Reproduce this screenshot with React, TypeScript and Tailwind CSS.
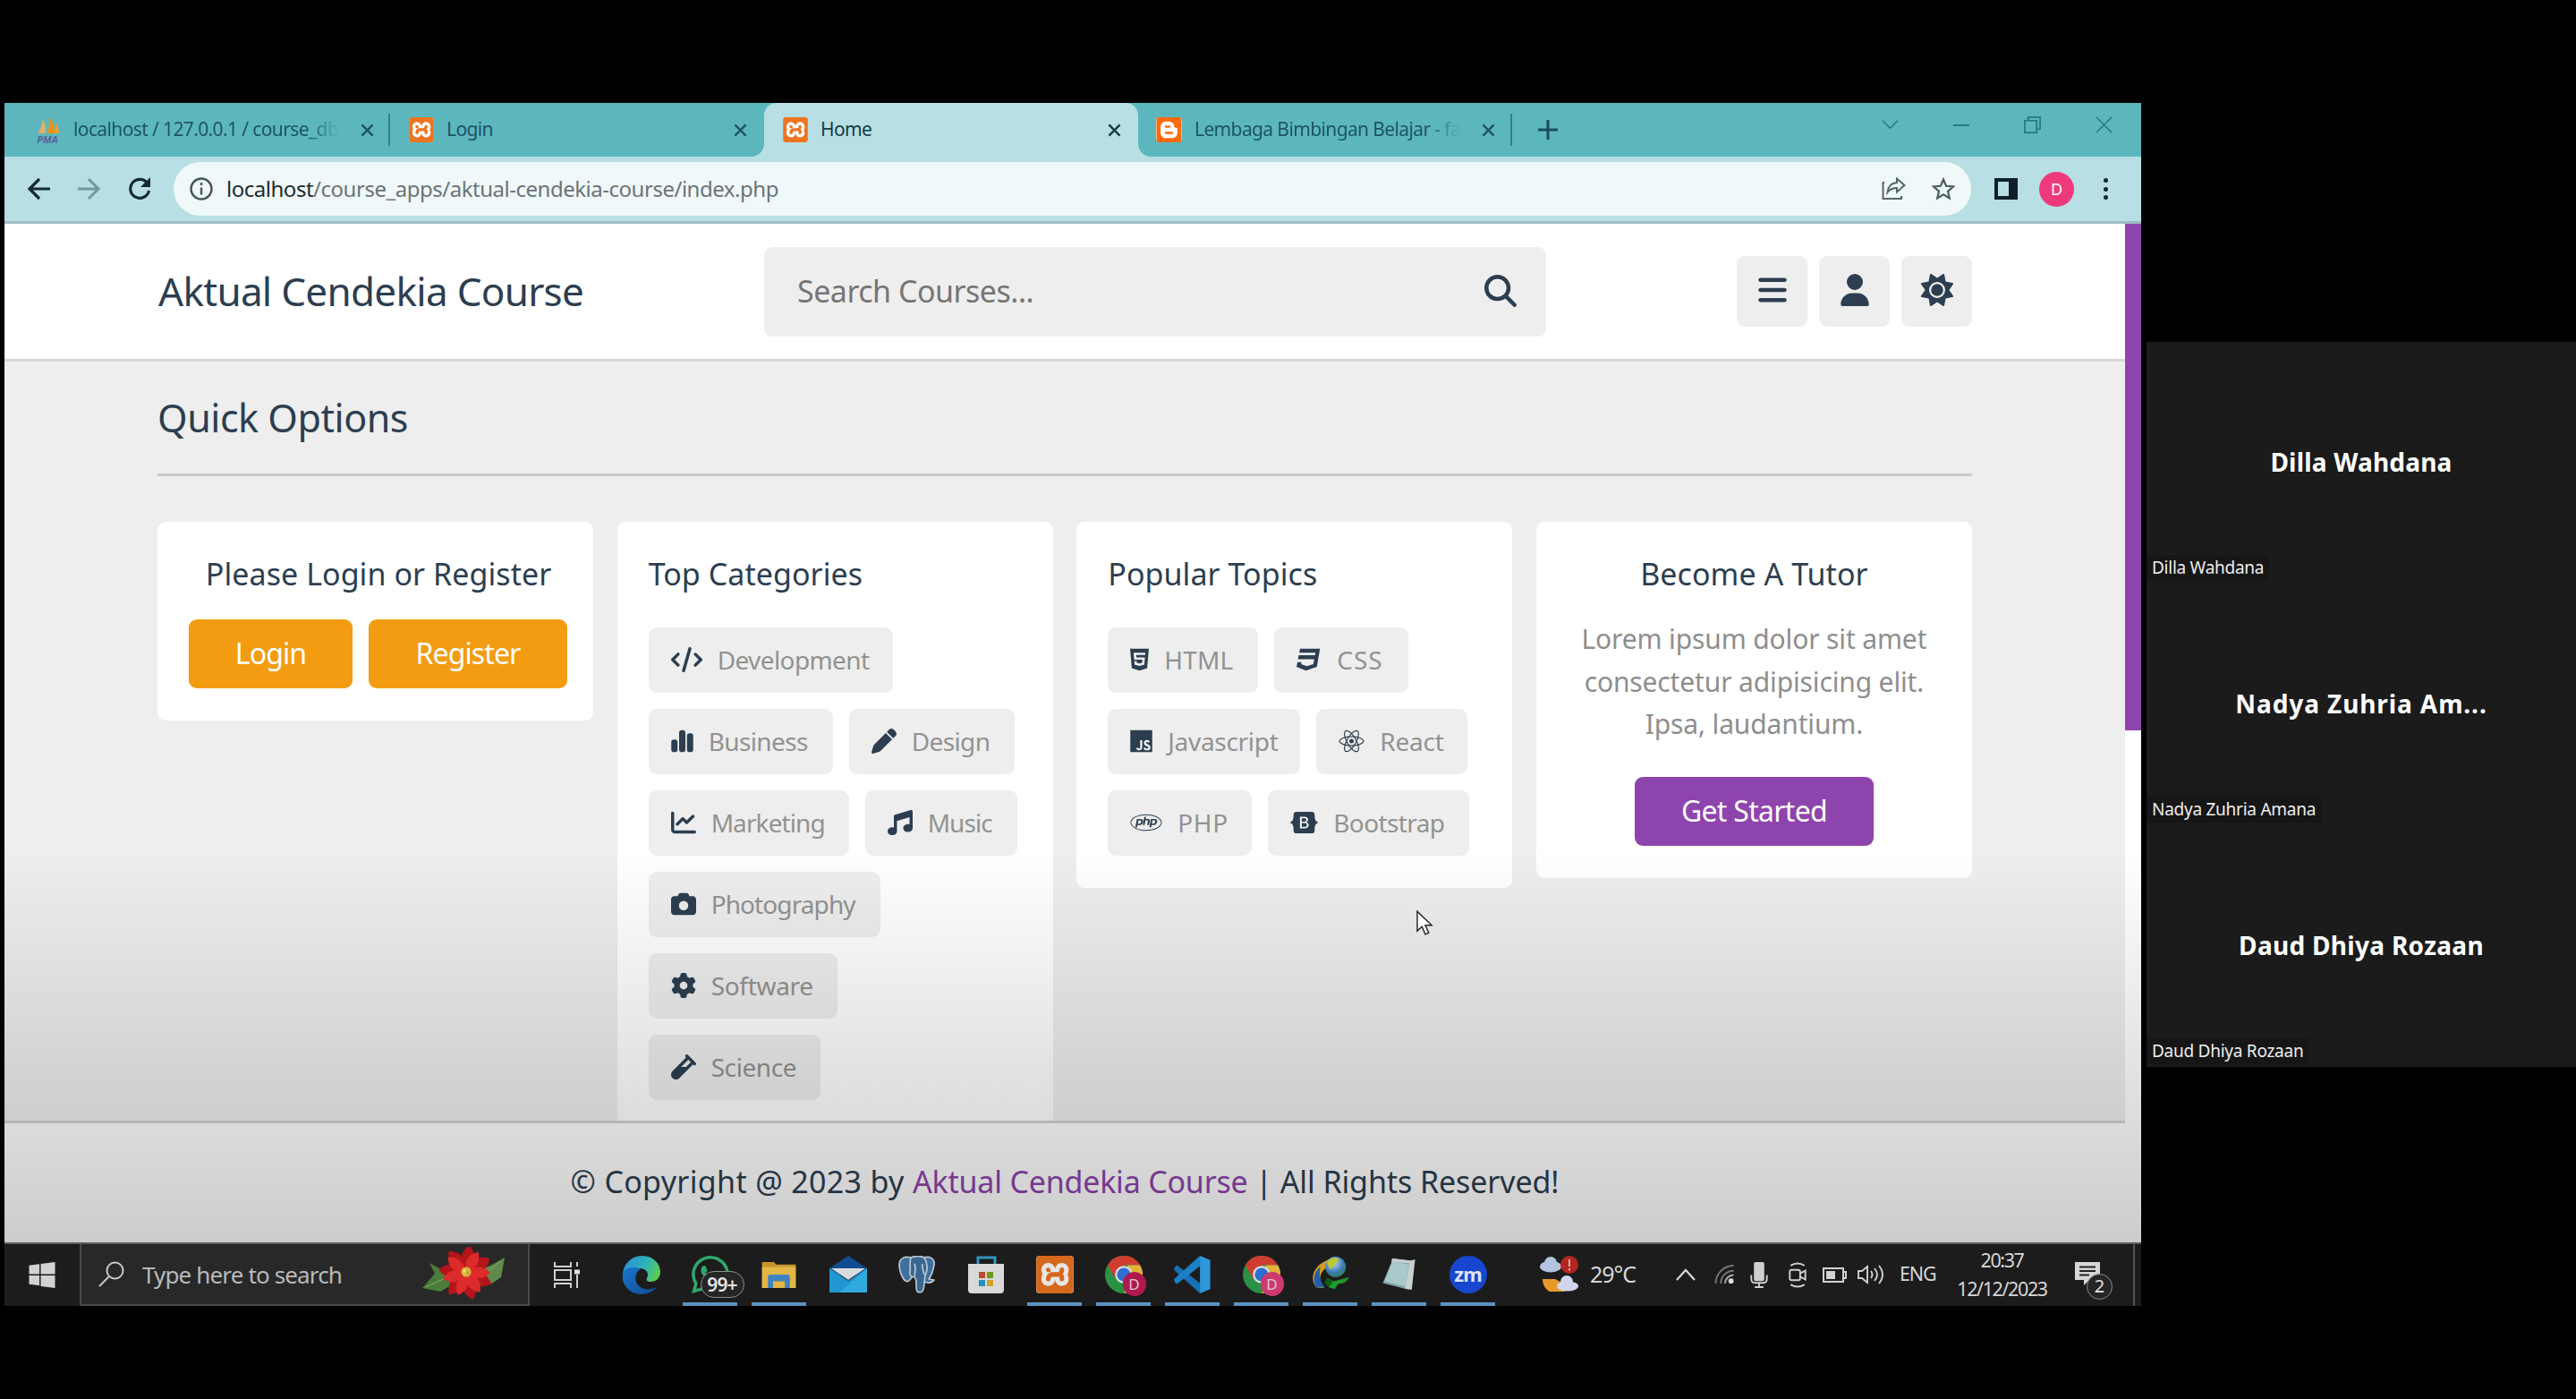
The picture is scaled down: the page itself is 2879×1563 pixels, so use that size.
import React from "react";
import type { IconType } from "react-icons";
import {
  FaCode, FaChartSimple, FaPen, FaChartLine, FaMusic, FaCamera, FaGear, FaVial,
  FaHtml5, FaCss3, FaJs, FaReact, FaPhp, FaBootstrap, FaMagnifyingGlass, FaBars,
  FaUser, FaSun, FaWhatsapp,
} from "react-icons/fa6";
import { SiXampp, SiBlogger } from "react-icons/si";

type Chip = { label: string; icon: IconType; box: string; ic: string; tx?: string };

const categories: Chip[] = [
  { label: "Development", icon: FaCode, box: "w-[273px]", ic: "w-[35px]" },
  { label: "Business", icon: FaChartSimple, box: "w-[206px]", ic: "w-[25px]" },
  { label: "Design", icon: FaPen, box: "w-[185px]", ic: "w-[28px]" },
  { label: "Marketing", icon: FaChartLine, box: "w-[224px]", ic: "w-[28px]", tx: "tracking-[-0.9px]" },
  { label: "Music", icon: FaMusic, box: "w-[170px]", ic: "w-[28px]", tx: "tracking-[-0.9px]" },
  { label: "Photography", icon: FaCamera, box: "w-[259px]", ic: "w-[28px]", tx: "tracking-[-0.9px]" },
  { label: "Software", icon: FaGear, box: "w-[211px]", ic: "w-[28px]", tx: "tracking-[-0.3px]" },
  { label: "Science", icon: FaVial, box: "w-[192px]", ic: "w-[28px]", tx: "tracking-[-0.4px]" },
];

const topics: Chip[] = [
  { label: "HTML", icon: FaHtml5, box: "w-[168px]", ic: "w-[21px]", tx: "tracking-[0.2px]" },
  { label: "CSS", icon: FaCss3, box: "w-[150px]", ic: "w-[28px]", tx: "tracking-[1px]" },
  { label: "Javascript", icon: FaJs, box: "w-[215px]", ic: "w-[25px]", tx: "tracking-[-0.3px]" },
  { label: "React", icon: FaReact, box: "w-[169px]", ic: "w-[29px]", tx: "tracking-[-0.2px]" },
  { label: "PHP", icon: FaPhp, box: "w-[161px]", ic: "w-[36px]", tx: "tracking-[0.6px]" },
  { label: "Bootstrap", icon: FaBootstrap, box: "w-[225px]", ic: "w-[31px]" },
];

function Chips({ items }: { items: Chip[] }) {
  return (
    <div className="mt-[30px] flex flex-wrap gap-[18px]">
      {items.map(({ label, icon: Icon, box, ic, tx = "tracking-[-0.6px]" }) => (
        <div key={label} className={`flex h-[73px] items-center gap-[17px] rounded-[9px] bg-[#eee] pb-[2px] pl-[25px] ${box}`}>
          <Icon className={`h-[28px] shrink-0 text-[#2c3e50] ${ic}`} />
          <span className={`text-[28px] leading-none whitespace-nowrap text-[#929292] ${tx}`}>{label}</span>
        </div>
      ))}
    </div>
  );
}

function CardTitle({ children, center = false }: { children: React.ReactNode; center?: boolean }) {
  return (
    <h3 className={`flex h-[59px] items-center pb-[2px] text-[34px] leading-none tracking-[0.06px] text-[#2c3e50] ${center ? "justify-center" : ""}`}>
      {children}
    </h3>
  );
}

const card = "rounded-[9px] bg-white px-[35px] pt-[29px] pb-[36px]";

function Xampp({ className }: { className: string }) {
  return (
    <span className={`relative flex shrink-0 rounded-[4px] bg-white ${className}`}>
      <SiXampp className="h-full w-full text-[#ee7420]" />
    </span>
  );
}

function Close({ className = "" }: { className?: string }) {
  return (
    <svg viewBox="0 0 16 16" className={`h-[15px] w-[15px] shrink-0 ${className}`} fill="none" stroke="currentColor" strokeWidth="2.6">
      <path d="M1.5 1.5l13 13M14.5 1.5l-13 13" />
    </svg>
  );
}

function PmaIcon() {
  return (
    <span className="relative flex h-[28px] w-[30px] shrink-0 justify-center">
      <svg viewBox="0 0 30 28" className="h-[28px] w-[30px]">
        <path d="M4 18Q9 10 10 2Q14 9 13 18z" fill="#d9b26a" />
        <path d="M14 18Q19 9 18 0Q24 9 23 18z" fill="#f29111" />
        <path d="M23 18Q25 12 24 6Q28 12 28 18z" fill="#f5a02c" />
      </svg>
      <span className="absolute bottom-[-2px] text-[11px] leading-none font-bold text-[#5a5f9c] italic">PMA</span>
    </span>
  );
}

function TabTitle({ children, className = "" }: { children: React.ReactNode; className?: string }) {
  return (
    <span className={`mb-[2px] ml-[14px] w-[297px] shrink-0 overflow-hidden text-[21px] leading-[32px] tracking-[-0.62px] whitespace-nowrap ${className}`}>
      {children}
    </span>
  );
}

const fade = "[mask-image:linear-gradient(to_right,black_88%,transparent)]";

function TabStrip() {
  return (
    <div className="flex h-[60px] bg-[#5cb6be] pl-[13px] text-[#1d5463]">
      <div className="flex w-[418px] items-center pl-[20px]">
        <PmaIcon />
        <TabTitle className={fade}>localhost / 127.0.0.1 / course_db</TabTitle>
        <Close className="ml-[24px]" />
        <span className="ml-auto h-[36px] w-[2px] bg-[#337f8a]" />
      </div>
      <div className="flex w-[418px] items-center pl-[21px]">
        <Xampp className="h-[28px] w-[28px]" />
        <TabTitle>Login</TabTitle>
        <Close className="ml-[24px]" />
      </div>
      <div className="relative flex w-[418px] items-center rounded-t-[14px] bg-[#b8dfe3] pl-[21px] text-[#153c48]">
        <span className="absolute bottom-0 left-[-14px] h-[14px] w-[14px] bg-[radial-gradient(circle_at_0_0,transparent_13.5px,#b8dfe3_14px)]" />
        <span className="absolute right-[-14px] bottom-0 h-[14px] w-[14px] bg-[radial-gradient(circle_at_100%_0,transparent_13.5px,#b8dfe3_14px)]" />
        <Xampp className="h-[28px] w-[28px]" />
        <TabTitle>Home</TabTitle>
        <Close className="ml-[24px]" />
      </div>
      <div className="flex w-[418px] items-center pl-[20px]">
        <span className="flex h-[28px] w-[29px] shrink-0 rounded-[4px] bg-white">
          <SiBlogger className="h-full w-full text-[#ff6a0a]" />
        </span>
        <TabTitle className={fade}>Lembaga Bimbingan Belajar - fa</TabTitle>
        <Close className="ml-[24px]" />
        <span className="ml-auto h-[36px] w-[2px] bg-[#337f8a]" />
      </div>
      <div className="flex flex-1 items-center pl-[29px]">
        <svg viewBox="0 0 22 22" className="h-[22px] w-[22px]" stroke="#1b4b5c" strokeWidth="3"><path d="M11 0v22M0 11h22" /></svg>
        <div className="mr-[32px] mb-[11px] ml-auto flex items-center gap-[61px] text-[#2b7681]">
          <svg viewBox="0 0 20 20" className="h-[19px] w-[19px]" fill="none" stroke="currentColor" strokeWidth="1.6"><path d="M1 5l9 9 9-9" /></svg>
          <span className="h-[2px] w-[18px] bg-[#2b7681]" />
          <svg viewBox="0 0 20 20" className="h-[19px] w-[19px]" fill="none" stroke="currentColor" strokeWidth="1.8"><path d="M1 5h14v14H1zM5 5V1h14v14h-4" /></svg>
          <svg viewBox="0 0 20 20" className="h-[19px] w-[19px]" fill="none" stroke="currentColor" strokeWidth="1.6"><path d="M1 1l18 18M19 1L1 19" /></svg>
        </div>
      </div>
    </div>
  );
}

function Toolbar() {
  return (
    <div className="flex h-[75px] items-center border-b-[3px] border-[#9fbcc1] bg-[#b8dfe3] pl-[25px]">
      <svg viewBox="0 0 26 26" className="h-[26px] w-[26px]" fill="none" stroke="#142a31" strokeWidth="3.2"><path d="M26 13H3M14 2L3 13l11 11" /></svg>
      <svg viewBox="0 0 26 26" className="ml-[31px] h-[26px] w-[26px]" fill="none" stroke="#6f999f" strokeWidth="3"><path d="M0 13h23M12 2l11 11-11 11" /></svg>
      <svg viewBox="0 0 26 26" className="ml-[30px] h-[26px] w-[26px]" fill="none" stroke="#142a31" strokeWidth="3.2"><path d="M22 7A10.5 10.5 0 1 0 23.5 15" /><path d="M25 0v11H14z" fill="#142a31" stroke="none" /></svg>
      <div className="ml-[25px] flex h-[60px] w-[2009px] items-center rounded-full bg-[#f0f9f9] pr-[18px] pl-[18px]">
        <svg viewBox="0 0 26 26" className="h-[26px] w-[26px]" fill="none" stroke="#45565a" strokeWidth="2.4"><circle cx="13" cy="13" r="11.5" /><path d="M13 11.5v8M13 6v3" /></svg>
        <span className="ml-[15px] text-[24px] leading-none tracking-[-0.48px] text-[#6a7477]">
          <span className="text-[#1d2b2f]">localhost</span>/course_apps/aktual-cendekia-course/index.php
        </span>
        <svg viewBox="0 0 28 26" className="ml-auto h-[26px] w-[28px]" fill="none" stroke="#56666a" strokeWidth="2"><path d="M3 6H1.500V24H22v-3M17 1.500l8.500 7.500L17 16.500V12c-5 0-8 1.500-10.500 5C7 11 10.500 6.500 17 6z" /></svg>
        <svg viewBox="0 0 26 26" className="ml-[28px] h-[26px] w-[26px]" fill="none" stroke="#4b5b5f" strokeWidth="2.200"><path d="M13 2.500l3.100 7.300 7.900.7-6 5.200 1.800 7.800L13 19.400l-6.800 4.100L8 15.700l-6-5.200 7.900-.7z" /></svg>
      </div>
      <svg viewBox="0 0 26 24" className="ml-[26px] h-[24px] w-[26px]"><path d="M0 0h26v24H0zM4 4v16h12V4z" fill="#101f28" fillRule="evenodd" /></svg>
      <span className="ml-[24px] flex h-[39px] w-[39px] items-center justify-center rounded-full bg-[#ee3a7c] text-[18px] leading-none text-white">D</span>
      <div className="ml-[33px] flex flex-col gap-[4.500px]">
        <span className="h-[5px] w-[5px] rounded-full bg-[#16262c]" />
        <span className="h-[5px] w-[5px] rounded-full bg-[#16262c]" />
        <span className="h-[5px] w-[5px] rounded-full bg-[#16262c]" />
      </div>
    </div>
  );
}

function SiteHeader() {
  return (
    <header className="flex h-[154px] shrink-0 items-center justify-between border-b-[3px] border-[#d8d8d8] bg-white pr-[171px] pl-[172px]">
      <span className="mb-[2px] w-[677px] text-[44px] leading-none tracking-[-0.7px] text-[#2c3e50]">Aktual Cendekia Course</span>
      <div className="flex h-[100px] w-[874px] items-center rounded-[9px] bg-[#eee] pr-[33px] pb-[2px] pl-[37px]">
        <span className="text-[34px] leading-none tracking-[-0.5px] text-[#757575]">Search Courses...</span>
        <FaMagnifyingGlass className="ml-auto h-[36px] w-[36px] text-[#2c3e50]" />
      </div>
      <div className="ml-auto flex gap-[13px]">
        {[FaBars, FaUser, FaSun].map((Icon, i) => (
          <span key={i} className="flex h-[79px] w-[79px] items-center justify-center rounded-[9px] bg-[#eee]">
            <Icon className="mb-[3px] h-[36px] w-[36px] text-[#2c3e50]" />
          </span>
        ))}
      </div>
    </header>
  );
}

function Site() {
  return (
    <div className="relative flex h-[1138px] overflow-hidden bg-[#eee]">
      <div className="flex w-[2370px] flex-col">
        <SiteHeader />
        <main className="min-h-0 flex-1 overflow-hidden px-[171px]">
          <h1 className="flex h-[128px] items-center border-b-[3px] border-[#c8c8c8] pb-[1px] text-[43px] leading-none tracking-[-0.45px] text-[#2c3e50]">Quick Options</h1>
          <div className="mt-[51px] grid grid-cols-4 items-start gap-[26.500px]">
            <section className={`${card} pr-[28px]`}>
              <CardTitle center>Please Login or Register</CardTitle>
              <div className="mt-[21px] flex gap-[18px] text-[32px] leading-none tracking-[-0.9px] text-white">
                <span className="flex h-[77px] w-[183px] shrink-0 items-center justify-center rounded-[9px] bg-[#f39c12] pb-[1px]">Login</span>
                <span className="flex h-[77px] w-[222px] shrink-0 items-center justify-center rounded-[9px] bg-[#f39c12] pb-[1px]">Register</span>
              </div>
            </section>
            <section className={`${card} h-[760px]`}>
              <CardTitle>Top Categories</CardTitle>
              <Chips items={categories} />
            </section>
            <section className={card}>
              <CardTitle>Popular Topics</CardTitle>
              <Chips items={topics} />
            </section>
            <section className={`${card} flex flex-col items-center`}>
              <CardTitle center>Become A Tutor</CardTitle>
              <p className="mt-[19px] text-center text-[30px] leading-[47.500px] tracking-[-0.14px] text-[#8e8e8e]">
                Lorem ipsum dolor sit amet<br />consectetur adipisicing elit.<br />Ipsa, laudantium.
              </p>
              <span className="mt-[35px] flex h-[77px] w-[267px] items-center justify-center rounded-[9px] bg-[#8e44ad] pb-[1px] text-[32px] leading-none tracking-[-0.7px] text-white">Get Started</span>
            </section>
          </div>
        </main>
        <footer className="flex h-[136px] shrink-0 items-center justify-center border-t-[3px] border-[#d2d2d2] bg-white pb-[3px] text-[34px] leading-none text-[#2c3e50]">
          <span className="tracking-[0.330px] whitespace-pre">© Copyright @ 2023 by <span className="tracking-[-0.200px] text-[#8e44ad]">Aktual Cendekia Course</span><span className="tracking-[-0.100px]"> | All Rights Reserved!</span></span>
        </footer>
      </div>
      <div className="w-[18px] bg-white">
        <div className="h-[566px] bg-[#8e44ad]" />
      </div>
      <div className="absolute inset-x-0 bottom-0 h-[440px] bg-linear-to-b from-transparent to-black/20" />
      <svg viewBox="0 0 20 30" className="absolute top-[767px] left-[1578px] h-[29px] w-[19px]"><path d="M1 1v23l5.500-5 4 9 4-1.700-4-9H18z" fill="#fff" stroke="#222" strokeWidth="1.500" /></svg>
    </div>
  );
}

function Poinsettia() {
  const back = [10, 62, 118, 170, 222, 280, 325];
  const front = [30, 90, 145, 200, 255, 310];
  return (
    <svg viewBox="0 0 92 60" className="h-[60px] w-[92px]">
      <path d="M30 30L8 18l6 12L0 46l20 4 18-10z" fill="#4c7c3a" />
      <path d="M60 28l18-8 14-8-4 22-12 8-14-4z" fill="#5f8a4b" />
      <path d="M4 45l26-12M62 36l26-20" stroke="#86a86f" strokeWidth="1" />
      {back.map((a) => (
        <path key={a} d="M49 29Q33 14 47 -2Q64 12 49 29z" fill="#b3151a" transform={`rotate(${a} 49 29)`} />
      ))}
      {front.map((a) => (
        <path key={a} d="M49 29Q36 15 49 2Q61 14 49 29z" fill="#dd2b2b" transform={`rotate(${a} 49 29)`} />
      ))}
      <circle cx="49" cy="28" r="5.500" fill="#d9b93a" />
      <circle cx="47" cy="27" r="1.500" fill="#f3e37a" />
      <circle cx="51" cy="29" r="1.500" fill="#a9a02c" />
    </svg>
  );
}

function TaskView() {
  return (
    <svg viewBox="0 0 29 29" className="h-[29px] w-[29px]" fill="none" stroke="#d0d0d0" strokeWidth="2">
      <path d="M1 0v5h18V0M1 29v-5h18v5M1 9h18v11H1zM26 0v5M26 14v15" />
      <path d="M23 8.500h6v5h-6z" fill="#e4e4e4" stroke="none" />
    </svg>
  );
}

function Edge() {
  return (
    <svg viewBox="0 0 44 44" className="h-[44px] w-[44px]">
      <defs>
        <linearGradient id="edgeTop" x1="0" x2="1" y1="0.300" y2="0.600"><stop offset="0" stopColor="#2b8fd6" /><stop offset="0.600" stopColor="#2fb5b5" /><stop offset="1" stopColor="#5fce4c" /></linearGradient>
        <linearGradient id="edgeLow" x1="0" x2="1" y1="0" y2="1"><stop offset="0" stopColor="#1976c9" /><stop offset="1" stopColor="#0f4c93" /></linearGradient>
      </defs>
      <path d="M1 20C3 8 12 1 23 1c12 0 20 9 20 18 0 8-6 11-11 11-4 0-5-2-4-4 3-6-1-11-8-11C11 15 4 21 1 30z" fill="url(#edgeTop)" />
      <path d="M1 20c4-7 14-8 20-4-5 3-7 8-5 14 3 8 12 11 23 6-4 5-10 8-17 8C9 44-1 34 1 20z" fill="url(#edgeLow)" />
    </svg>
  );
}

function WhatsApp() {
  return (
    <span className="relative flex">
      <FaWhatsapp className="h-[48px] w-[44px] text-[#2fa86c]" />
      <span className="absolute top-[20px] left-[11px] flex h-[30px] w-[49px] items-center justify-center rounded-full border-[1.500px] border-[#8d8d8d] bg-[#252525] text-[21px] leading-none font-semibold tracking-[-0.800px] text-[#e4e4e4]">99+</span>
    </span>
  );
}

function Explorer() {
  return (
    <svg viewBox="0 0 40 34" className="h-[32px] w-[39px]">
      <path d="M0 2h14l3 3h23v28H0z" fill="#c7952b" />
      <path d="M0 8h40v25H0z" fill="#e3b646" />
      <path d="M7 33V20q0-3 3-3h20q3 0 3 3v13h-6v-8H13v8z" fill="#3f83c1" />
    </svg>
  );
}

function Mail() {
  return (
    <svg viewBox="0 0 44 42" className="h-[42px] w-[44px]">
      <path d="M1 14L22 0l21 14v8H1z" fill="#124b90" />
      <path d="M3 14h38L22 27z" fill="#d9dcdf" />
      <path d="M1 14l21 14 21-14v27H1z" fill="#2196d0" />
      <path d="M43 14L12 41h31z" fill="#38b0e4" opacity="0.700" />
    </svg>
  );
}

function Elephant() {
  return (
    <svg viewBox="0 0 42 42" className="h-[42px] w-[42px]" stroke="#b9c6d2" strokeWidth="1.700" strokeLinejoin="round">
      <path d="M14 2C7 0 1 3 1 10c0 6 3 15 7 18 3 2 5-1 7-4z" fill="#3f6f9c" />
      <path d="M28 2c7-2 13 1 12 8-1 6-3 12-6 16l6 1c-2 3-7 4-11 2z" fill="#3f6f9c" />
      <path d="M14 2c5-2 11-2 15 0 4 6 4 14 1 20l-1 8c0 7-1 11-5 11s-4-4-4-9c0-4 0-7-2-8-4 0-6-3-5-7 1-5-1-9 1-15z" fill="#3a6792" />
      <path d="M18 9c2 4 1 8 0 14M27 9c-1 4 1 8 2 12" fill="none" />
    </svg>
  );
}

function Store() {
  return (
    <svg viewBox="0 0 42 42" className="h-[42px] w-[42px]">
      <path d="M12 10V2h19v8" fill="none" stroke="#2d97bd" strokeWidth="3" />
      <path d="M1 9h40v29q0 4-4 4H5q-4 0-4-4z" fill="#d9d9d9" />
      <path d="M13 18h7v7h-7z" fill="#c04a2b" /><path d="M22 18h7v7h-7z" fill="#6f9a1d" />
      <path d="M13 27h7v7h-7z" fill="#2590bf" /><path d="M22 27h7v7h-7z" fill="#d0a020" />
    </svg>
  );
}

function Chrome({ badge }: { badge: string }) {
  return (
    <span className="relative flex">
      <svg viewBox="0 0 42 42" className="h-[42px] w-[42px]">
        <circle cx="21" cy="21" r="21" fill="#2a9145" />
        <path d="M2.800 10.500A21 21 0 0 1 39.200 10.500H21L12 26z" fill="#cf3d30" />
        <path d="M39.200 10.500A21 21 0 0 1 21 42L30 26l-5-15.500z" fill="#e2b23a" />
        <circle cx="21" cy="21" r="9.800" fill="#dedede" />
        <circle cx="21" cy="21" r="7.600" fill="#2f6fd0" />
      </svg>
      <span className={`absolute top-[18px] left-[20px] flex h-[27px] w-[26px] items-center justify-center rounded-full text-[17px] leading-none text-[#e3c3cd] ${badge}`}>D</span>
    </span>
  );
}

function VsCode() {
  return (
    <svg viewBox="0 0 44 44" className="h-[42px] w-[43px]">
      <path d="M31 44L1 17v-3l3-3 27 21z" fill="#1672b4" />
      <path d="M31 12L4 33l-3-3v-3L31 0z" fill="#1b80c6" />
      <path d="M31 0l12 5v34l-12 5z" fill="#2c97dc" />
    </svg>
  );
}

function Idm() {
  return (
    <svg viewBox="0 0 44 42" className="h-[40px] w-[44px]">
      <defs><radialGradient id="globe" cx="0.400" cy="0.300" r="0.800"><stop offset="0" stopColor="#c3dbea" /><stop offset="0.600" stopColor="#3b78b5" /><stop offset="1" stopColor="#2a8a3a" /></radialGradient></defs>
      <path d="M22 3C4 8-4 24 5 36l9 1C6 26 10 14 24 10z" fill="#d59a20" />
      <path d="M5 36C0 26 4 16 10 12c-2 10 0 18 6 24z" fill="#205fb0" />
      <circle cx="28" cy="12" r="12" fill="url(#globe)" />
      <path d="M18 6c5-6 11-5 14-3-3 5-6 9-11 12z" fill="#bcc832" />
      <path d="M18 25l8 4 18-5c-3 6-8 8-13 8l-4 6-7-2z" fill="#1f9a28" />
      <path d="M18 25l-3 6 5 5 5-7z" fill="#0d5f16" />
    </svg>
  );
}

function Notepad() {
  return (
    <svg viewBox="0 0 40 40" className="h-[38px] w-[39px]">
      <path d="M13 1l24 3-5 34L1 30z" fill="#7fa3a6" />
      <path d="M12 5l20 3-5 26L3 28z" fill="#a9c9cb" />
      <path d="M33 4l6-2-4 36-8-2z" fill="#c9d2d2" />
      <path d="M12 1l25 3v3L11 5z" fill="#c8cfcf" />
    </svg>
  );
}

const apps: { node: React.ReactNode; open: boolean }[] = [
  { node: <Edge />, open: false },
  { node: <WhatsApp />, open: true },
  { node: <Explorer />, open: true },
  { node: <Mail />, open: false },
  { node: <Elephant />, open: false },
  { node: <Store />, open: false },
  { node: <Xampp className="h-[42px] w-[42px] brightness-90" />, open: true },
  { node: <Chrome badge="bg-[#b0184e]" />, open: true },
  { node: <VsCode />, open: true },
  { node: <Chrome badge="bg-[#cc3a6f]" />, open: true },
  { node: <Idm />, open: true },
  { node: <Notepad />, open: true },
  { node: <span className="flex h-[42px] w-[42px] items-center justify-center rounded-full bg-[#1747cf] pb-[3px] text-[22px] leading-none font-bold tracking-[-1px] text-[#dfe4f5]">zm</span>, open: true },
];

function Taskbar() {
  return (
    <div className="flex h-[71px] border-t-[2px] border-[#5a5c5b] bg-[#1d1c1c] text-[#d6d6d6]">
      <div className="flex w-[84px] items-center justify-center pb-[1px]">
        <svg viewBox="0 0 30 30" className="h-[29px] w-[30px]" fill="#d2d2d2"><path d="M0 4l12-1.700V14H0zM13.500 2L30 0v14H13.500zM0 15.500h12v11.700L0 25.700zM13.500 15.500H30V30l-16.500-2z" /></svg>
      </div>
      <div className="flex w-[503px] items-center border-x-[2px] border-b-[2px] border-[#4a4a4a] bg-[#282828] pl-[19px]">
        <svg viewBox="0 0 29 29" className="h-[29px] w-[29px]" fill="none" stroke="#c9c9c9" strokeWidth="2"><circle cx="18.500" cy="10.500" r="9" /><path d="M12 17L1 28" /></svg>
        <span className="ml-[20px] w-[225px] text-[26px] leading-none tracking-[-0.860px] whitespace-nowrap text-[#b9b9b9]">Type here to search</span>
        <span className="mb-[2px] ml-[88px]"><Poinsettia /></span>
      </div>
      <div className="flex w-[86px] items-center pl-[27px]"><TaskView /></div>
      {apps.map((a, i) => (
        <div key={i} className="relative flex w-[77px] shrink-0 items-center justify-center pb-[1px]">
          {a.node}
          {a.open && <span className="absolute bottom-0 left-[8px] h-[4px] w-[61px] bg-[#5b93c4]" />}
        </div>
      ))}
      <div className="flex w-[149px] shrink-0 items-center pl-[42px]">
        <svg viewBox="0 0 43 40" className="mb-[3px] h-[40px] w-[43px] shrink-0">
          <path d="M3 26a16 16 0 0 0 30 8l-16-8z" fill="#e79a2a" />
          <ellipse cx="12" cy="12" rx="12" ry="6.500" fill="#b4c3de" /><circle cx="12" cy="8" r="7" fill="#b4c3de" />
          <ellipse cx="31" cy="34" rx="12" ry="5.500" fill="#cfd6ee" /><circle cx="30" cy="29" r="7" fill="#cfd6ee" />
          <circle cx="33" cy="10" r="10" fill="#b3261f" /><path d="M33 4v8M33 14v2.500" stroke="#e7a9a4" strokeWidth="2" />
        </svg>
        <span className="mb-[2px] ml-[13px] text-[25px] leading-none tracking-[-1px]">29°C</span>
      </div>
      <div className="flex flex-1 items-center pb-[1px] pl-[45px]">
        <svg viewBox="0 0 22 14" className="h-[14px] w-[22px]" fill="none" stroke="#d6d6d6" strokeWidth="2.200"><path d="M1 13L11 2l10 11" /></svg>
        <svg viewBox="0 0 23 23" className="ml-[21px] h-[22px] w-[23px]" fill="none" stroke="#777" strokeWidth="2"><path d="M1 22A21 21 0 0 1 22 1M7 22A15 15 0 0 1 22 7" /><path d="M12 22A10 10 0 0 1 22 12" stroke="#aaa" /><circle cx="19" cy="19" r="3" fill="#ddd" stroke="none" /></svg>
        <svg viewBox="0 0 20 30" className="ml-[17px] h-[29px] w-[20px]"><rect x="4" y="0" width="12" height="22" rx="2" fill="#cfcfcf" /><path d="M1 15v5q0 4 4 4h10q4 0 4-4v-5M10 24v5M5 29h10" fill="none" stroke="#cfcfcf" strokeWidth="2" /></svg>
        <svg viewBox="0 0 22 30" className="ml-[22px] h-[29px] w-[22px]" fill="none" stroke="#cfcfcf" strokeWidth="2"><rect x="2" y="9" width="12" height="12" rx="2" /><path d="M14 13l6-3v10l-6-3M3 4q8-5 16 0M3 26q8 5 16 0" /></svg>
        <svg viewBox="0 0 27 17" className="ml-[17px] h-[17px] w-[27px]"><path d="M1 1h22v15H1zM23 5h3v7h-3" fill="none" stroke="#d2d2d2" strokeWidth="2" /><path d="M4 4h10v9H4z" fill="#d2d2d2" /></svg>
        <svg viewBox="0 0 30 22" className="ml-[12px] h-[22px] w-[30px]" fill="none" stroke="#cfcfcf" strokeWidth="1.900"><path d="M1 7h4l6-5v18l-6-5H1zM15 7q3 4 0 8M19 4q6 7 0 14M24 1q8 10 0 20" /></svg>
        <span className="mb-[2px] ml-[17px] w-[40px] text-[21.500px] leading-none tracking-[-1.200px]">ENG</span>
        <div className="ml-[23px] flex w-[103px] flex-col items-center text-[21.500px] leading-[32px] tracking-[-1.400px] whitespace-nowrap">
          <span>20:37</span>
          <span>12/12/2023</span>
        </div>
        <span className="relative mb-[3px] ml-[30px] flex">
          <svg viewBox="0 0 28 26" className="h-[26px] w-[28px]"><path d="M0 0h28v20H16l-6 6v-6H0z" fill="#d6d6d6" /><path d="M5 5.500h18M5 10h18M5 14.500h11" stroke="#222" strokeWidth="1.800" /></svg>
          <span className="absolute top-[13px] left-[13px] flex h-[29px] w-[29px] items-center justify-center rounded-full border-[1.500px] border-[#8d8d8d] bg-[#252525] text-[20px] leading-none text-[#e4e4e4]">2</span>
        </span>
      </div>
      <span className="mr-[7px] w-[2px] bg-[#555]" />
    </div>
  );
}

const people = [
  { name: "Dilla Wahdana", big: "Dilla Wahdana", track: "tracking-[0.200px]" },
  { name: "Nadya Zuhria Amana", big: "Nadya Zuhria Am...", track: "tracking-[0.900px]" },
  { name: "Daud Dhiya Rozaan", big: "Daud Dhiya Rozaan", track: "tracking-[0.300px]" },
];

export default function App() {
  return (
    <div className="flex h-[1563px] w-[2879px] overflow-hidden bg-black pl-[5px] font-['Noto_Sans',sans-serif]">
      <div className="mt-[115px] flex h-[1344px] w-[2388px] shrink-0 flex-col overflow-hidden">
        <TabStrip />
        <Toolbar />
        <Site />
        <Taskbar />
      </div>
      <div className="mt-[382px] ml-[6px] flex h-[810px] w-[480px] shrink-0 flex-col bg-[#1b1b1b]">
        {people.map((p) => (
          <div key={p.name} className="relative flex h-[270px] items-center justify-center pb-[3px]">
            <span className={`text-[28px] leading-none font-bold text-white ${p.track}`}>{p.big}</span>
            <span className="absolute bottom-[3px] left-0 bg-[#161616] px-[6px] text-[19px] leading-[29px] tracking-[-0.260px] text-[#eee]">{p.name}</span>
          </div>
        ))}
      </div>
    </div>
  );
}
